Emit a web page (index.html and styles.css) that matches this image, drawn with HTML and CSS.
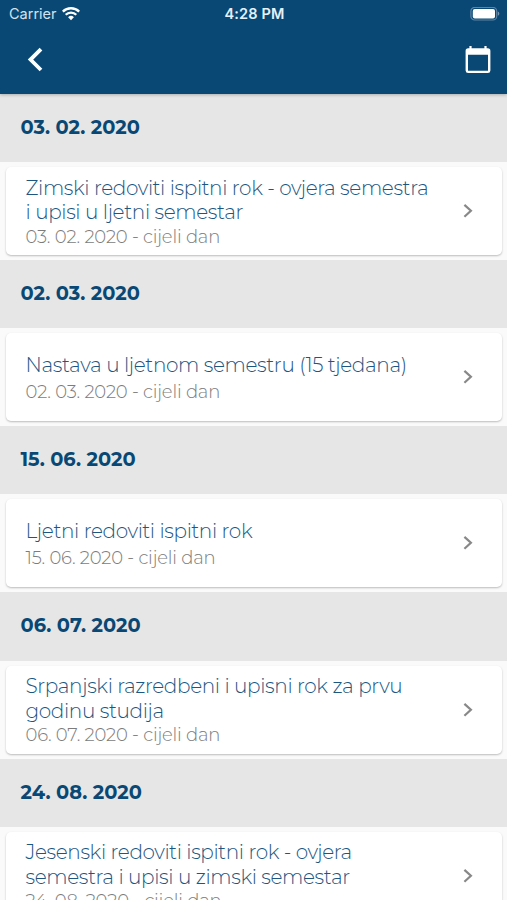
FILE: index.html
```html
<!DOCTYPE html>
<html lang="hr">
<head>
  <meta charset="UTF-8">
  <meta name="viewport" content="width=device-width, initial-scale=1.0">
  <title>Kalendar</title>
  <link rel="stylesheet" href="styles.css">
</head>
<body>
  <header class="app-bar">
    <div class="status-bar">
      <div class="carrier">
        <span class="carrier-name">Carrier</span>
        <svg class="wifi" viewBox="0 0 18 14" width="18" height="14">
          <path d="M.8 4.6a11.6 11.6 0 0 1 16.4 0" fill="none" stroke="#fff" stroke-width="2.4"/>
          <path d="M3.7 7.8a7.4 7.4 0 0 1 10.6 0" fill="none" stroke="#fff" stroke-width="2.2"/>
          <path d="M6.1 10.2a4.1 4.1 0 0 1 5.8 0L9 13.3z" fill="#fff"/>
        </svg>
      </div>
      <span class="clock">4:28 PM</span>
      <svg class="battery" viewBox="0 0 30 14" width="30" height="14">
        <rect x="0.9" y="0.4" width="25.8" height="12.6" rx="3.8" fill="none" stroke="#5d84a5" stroke-width="1.2"/>
        <rect x="2.8" y="2.1" width="22.2" height="9.4" rx="2" fill="#fff"/>
        <path d="M27.8 4.6q1.5.6 1.5 2.1t-1.5 2.1z" fill="#7596b3"/>
      </svg>
    </div>
    <div class="toolbar">
      <svg class="back" viewBox="0 0 16 26" width="16" height="26">
        <path d="M14 2.2 3.5 12.6 14 23" fill="none" stroke="#fff" stroke-width="3.8"/>
      </svg>
      <svg class="calendar" viewBox="0 0 26 28" width="26" height="28">
        <path d="M4.4 0h2.2v2.2h12.8V0h2.2v2.2h1.2a2.7 2.7 0 0 1 2.6 2.7v19.6a2.7 2.7 0 0 1-2.6 2.6H3.2a2.7 2.7 0 0 1-2.6-2.6V4.9a2.7 2.7 0 0 1 2.6-2.7h1.2zM3 8.8v15.9h20V8.8z" fill="#fff" fill-rule="evenodd"/>
      </svg>
    </div>
  </header>

  <main class="events">
    <h2 class="date">03. 02. 2020</h2>
    <div class="card two-lines">
      <div class="text">
        <p class="title">Zimski redoviti ispitni rok - ovjera semestra<br>i upisi u ljetni semestar</p>
        <p class="time">03. 02. 2020 - cijeli dan</p>
      </div>
      <svg class="chevron" viewBox="0 0 10 14" width="10" height="14"><path d="M1.4.9 7.9 6.8l-6.5 5.9"/></svg>
    </div>

    <h2 class="date">02. 03. 2020</h2>
    <div class="card">
      <div class="text">
        <p class="title">Nastava u ljetnom semestru (15 tjedana)</p>
        <p class="time">02. 03. 2020 - cijeli dan</p>
      </div>
      <svg class="chevron" viewBox="0 0 10 14" width="10" height="14"><path d="M1.4.9 7.9 6.8l-6.5 5.9"/></svg>
    </div>

    <h2 class="date">15. 06. 2020</h2>
    <div class="card">
      <div class="text">
        <p class="title">Ljetni redoviti ispitni rok</p>
        <p class="time">15. 06. 2020 - cijeli dan</p>
      </div>
      <svg class="chevron" viewBox="0 0 10 14" width="10" height="14"><path d="M1.4.9 7.9 6.8l-6.5 5.9"/></svg>
    </div>

    <h2 class="date">06. 07. 2020</h2>
    <div class="card two-lines">
      <div class="text">
        <p class="title">Srpanjski razredbeni i upisni rok za prvu<br>godinu studija</p>
        <p class="time">06. 07. 2020 - cijeli dan</p>
      </div>
      <svg class="chevron" viewBox="0 0 10 14" width="10" height="14"><path d="M1.4.9 7.9 6.8l-6.5 5.9"/></svg>
    </div>

    <h2 class="date">24. 08. 2020</h2>
    <div class="card two-lines">
      <div class="text">
        <p class="title">Jesenski redoviti ispitni rok - ovjera<br>semestra i upisi u zimski semestar</p>
        <p class="time">24. 08. 2020 - cijeli dan</p>
      </div>
      <svg class="chevron" viewBox="0 0 10 14" width="10" height="14"><path d="M1.4.9 7.9 6.8l-6.5 5.9"/></svg>
    </div>
  </main>
</body>
</html>
```
FILE: styles.css
```css
* {
    box-sizing: border-box;
}

body {
    margin: 0;
    height: 900px;
    display: flex;
    flex-direction: column;
    overflow: hidden;
    background-color: #fafafa;
    font-family: Montserrat, Inter, sans-serif;
}

.app-bar {
    flex: none;
    height: 94px;
    background-color: #094874;
    color: #fff;
    box-shadow: 0 1px 3px rgba(0, 0, 0, 0.25);
    z-index: 1;
}

.status-bar {
    height: 27px;
    padding: 0 7px 0 9px;
    display: grid;
    grid-template-columns: 1fr auto 1fr;
    align-items: center;
    font-family: Inter, sans-serif;
}

.carrier {
    display: flex;
    align-items: center;
    gap: 5px;
}

.carrier-name {
    font-size: 14.5px;
    color: #d3e2ee;
}

.clock {
    font-size: 14.5px;
    font-weight: 600;
    letter-spacing: 0.15px;
    color: #e6f1fa;
}

.battery {
    justify-self: end;
}

.toolbar {
    height: 66px;
    padding: 0 16px 0 27px;
    display: flex;
    justify-content: space-between;
    align-items: center;
}

.events {
    flex: 1;
    min-height: 0;
}

.date {
    margin: 0;
    height: 68.15px;
    padding-left: 20.5px;
    line-height: 67.6px;
    background-color: #e6e6e6;
    color: #094874;
    font-size: 19.4px;
    font-weight: 700;
}

.card {
    height: 88px;
    margin: 5px 5px 5px 6px;
    padding: 0 29px 0 19.5px;
    display: flex;
    justify-content: space-between;
    align-items: center;
    background-color: #fff;
    border-radius: 5px;
    box-shadow: 0 1px 2px rgba(0, 0, 0, 0.25);
}

.title,
.time {
    margin: 0;
    white-space: nowrap;
    font-weight: 300;
}

.title {
    padding-top: 5px;
    color: #1d5681;
    font-size: 20px;
    line-height: 24.5px;
    letter-spacing: -0.36px;
}

.time {
    color: #7c7c7c;
    font-size: 18px;
    line-height: 28.5px;
    letter-spacing: -0.18px;
}

.two-lines .title {
    padding-top: 2.5px;
}

.two-lines .time {
    line-height: 24px;
}

.chevron path {
    fill: none;
    stroke: #888;
    stroke-width: 2.2;
}
```
